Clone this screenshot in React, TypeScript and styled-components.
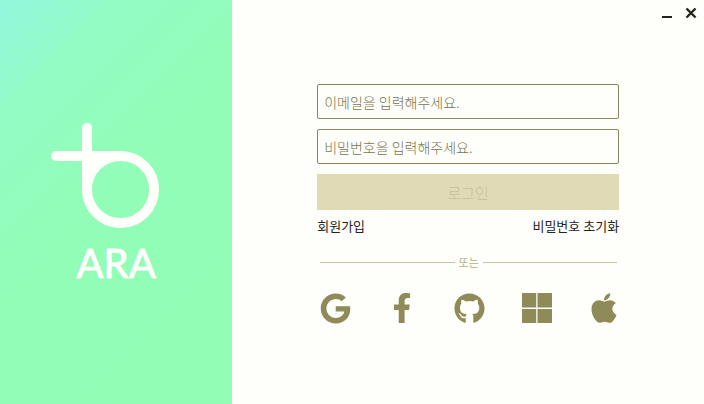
import React from 'react';
import styled, { createGlobalStyle } from 'styled-components';
import { FaApple, FaFacebookF, FaGithub, FaGoogle } from 'react-icons/fa';

const GlobalStyle = createGlobalStyle`
  *, *::before, *::after { box-sizing: border-box; }
  html, body, #root { height: 100%; margin: 0; }
  body {
    background: #fefefa;
    color: #24241c;
    font-family: "Noto Sans CJK KR", "Noto Sans", sans-serif;
    font-size: 13px;
  }
  button, input { font: inherit; color: inherit; }
`;

const Window = styled.div`
  display: grid;
  grid-template-columns: 33fr 67fr;
  min-height: 100%;
`;

const BrandPanel = styled.aside`
  display: flex;
  flex-direction: column;
  align-items: center;
  justify-content: center;
  padding: 4px 22px 0 0;
  background: linear-gradient(135deg, #93f7de 0%, #92fcc4 20%, #92fdb8 45%, #92fdb4 100%);
  color: #fefefa;
`;

const BrandMark = styled.svg`
  display: block;
  width: 108px;
  height: 106px;
`;

const BrandName = styled.div`
  margin-top: 12px;
  padding-left: 22px;
  font-family: Lato, sans-serif;
  font-size: 40px;
  line-height: 44px;
  -webkit-text-stroke: 1px currentColor;
`;

const LoginPanel = styled.main`
  display: flex;
  flex-direction: column;
  align-items: center;
`;

const TitleBar = styled.header`
  display: flex;
  align-self: stretch;
  justify-content: flex-end;
  height: 26px;
  padding-right: 1px;
`;

const WindowButton = styled.button`
  display: grid;
  place-items: center;
  width: 24px;
  padding: 0;
  border: 0;
  background: none;
`;

const Form = styled.form`
  display: flex;
  flex-direction: column;
  gap: 10px;
  width: 64%;
  margin-top: 58px;
`;

const Field = styled.input`
  width: 100%;
  height: 35px;
  padding: 0 6px;
  border: 1px solid #88865c;
  border-radius: 2px;
  background: transparent;
  font-size: 14px;
  font-weight: 300;
  outline: none;
  &::placeholder { color: #77754e; opacity: 1; }
`;

const SubmitButton = styled.button`
  height: 36px;
  border: 0;
  background: #e0dbb6;
  color: #c6c298;
  font-size: 15px;
  font-weight: 300;
`;

const Links = styled.nav`
  display: flex;
  justify-content: space-between;
  margin-top: -4px;
  line-height: 20px;
`;

const TextLink = styled.a`
  color: inherit;
  text-decoration: none;
`;

const Divider = styled.div`
  display: flex;
  align-items: center;
  gap: 4px;
  margin: 6px 2px 0 3px;
  color: #b5b184;
  font-size: 11px;
  line-height: 20px;
  &::before, &::after {
    content: "";
    flex: 1;
    height: 1px;
    background: #c9c5a0;
  }
`;

const Providers = styled.div`
  display: flex;
  justify-content: space-between;
  margin: 11px 0 0 3px;
`;

const ProviderButton = styled.button`
  display: grid;
  place-items: center;
  place-content: center;
  width: 30px;
  height: 30px;
  padding: 0;
  border: 0;
  background: none;
  color: #8e8b58;
`;

function MicrosoftIcon() {
  return (
    <svg width="30" height="30" viewBox="0 0 30 30" fill="currentColor" aria-hidden="true">
      <path d="M0 0H14.2V14.5H0ZM15.5 0H30V14.5H15.5ZM0 16H14.2V30H0ZM15.5 16H30V30H15.5Z" />
    </svg>
  );
}

const providers = [
  { name: 'Google', icon: <FaGoogle size={31} /> },
  { name: 'Facebook', icon: <FaFacebookF size={30} /> },
  { name: 'GitHub', icon: <FaGithub size={31} /> },
  { name: 'Microsoft', icon: <MicrosoftIcon /> },
  { name: 'Apple', icon: <FaApple size={34} /> },
];

export default function App() {
  return (
    <>
      <GlobalStyle />
      <Window>
        <BrandPanel>
          <BrandMark viewBox="0 0 108 106" fill="none" stroke="currentColor" strokeWidth="10" strokeLinecap="round" aria-hidden="true">
            <path d="M5 33H69.5M36 5V67" />
            <circle cx="69.5" cy="66.5" r="33.5" />
            <path d="M36 33H60L48 45L36 60Z" fill="currentColor" stroke="none" />
          </BrandMark>
          <BrandName>ARA</BrandName>
        </BrandPanel>
        <LoginPanel>
          <TitleBar>
            <WindowButton type="button" aria-label="최소화">
              <svg width="12" height="12" viewBox="0 0 12 12" stroke="currentColor" strokeWidth="2" aria-hidden="true">
                <path d="M1 10H11" />
              </svg>
            </WindowButton>
            <WindowButton type="button" aria-label="닫기">
              <svg width="12" height="12" viewBox="0 0 12 12" stroke="currentColor" strokeWidth="2.4" aria-hidden="true">
                <path d="M1.5 1.5L10.5 10.5M10.5 1.5L1.5 10.5" />
              </svg>
            </WindowButton>
          </TitleBar>
          <Form onSubmit={(event) => event.preventDefault()}>
            <Field type="email" aria-label="이메일" placeholder="이메일을 입력해주세요." />
            <Field type="password" aria-label="비밀번호" placeholder="비밀번호을 입력해주세요." />
            <SubmitButton type="submit">로그인</SubmitButton>
            <Links>
              <TextLink href="#signup">회원가입</TextLink>
              <TextLink href="#reset">비밀번호 초기화</TextLink>
            </Links>
            <Divider>또는</Divider>
            <Providers>
              {providers.map(({ name, icon }) => (
                <ProviderButton key={name} type="button" aria-label={name}>
                  {icon}
                </ProviderButton>
              ))}
            </Providers>
          </Form>
        </LoginPanel>
      </Window>
    </>
  );
}
